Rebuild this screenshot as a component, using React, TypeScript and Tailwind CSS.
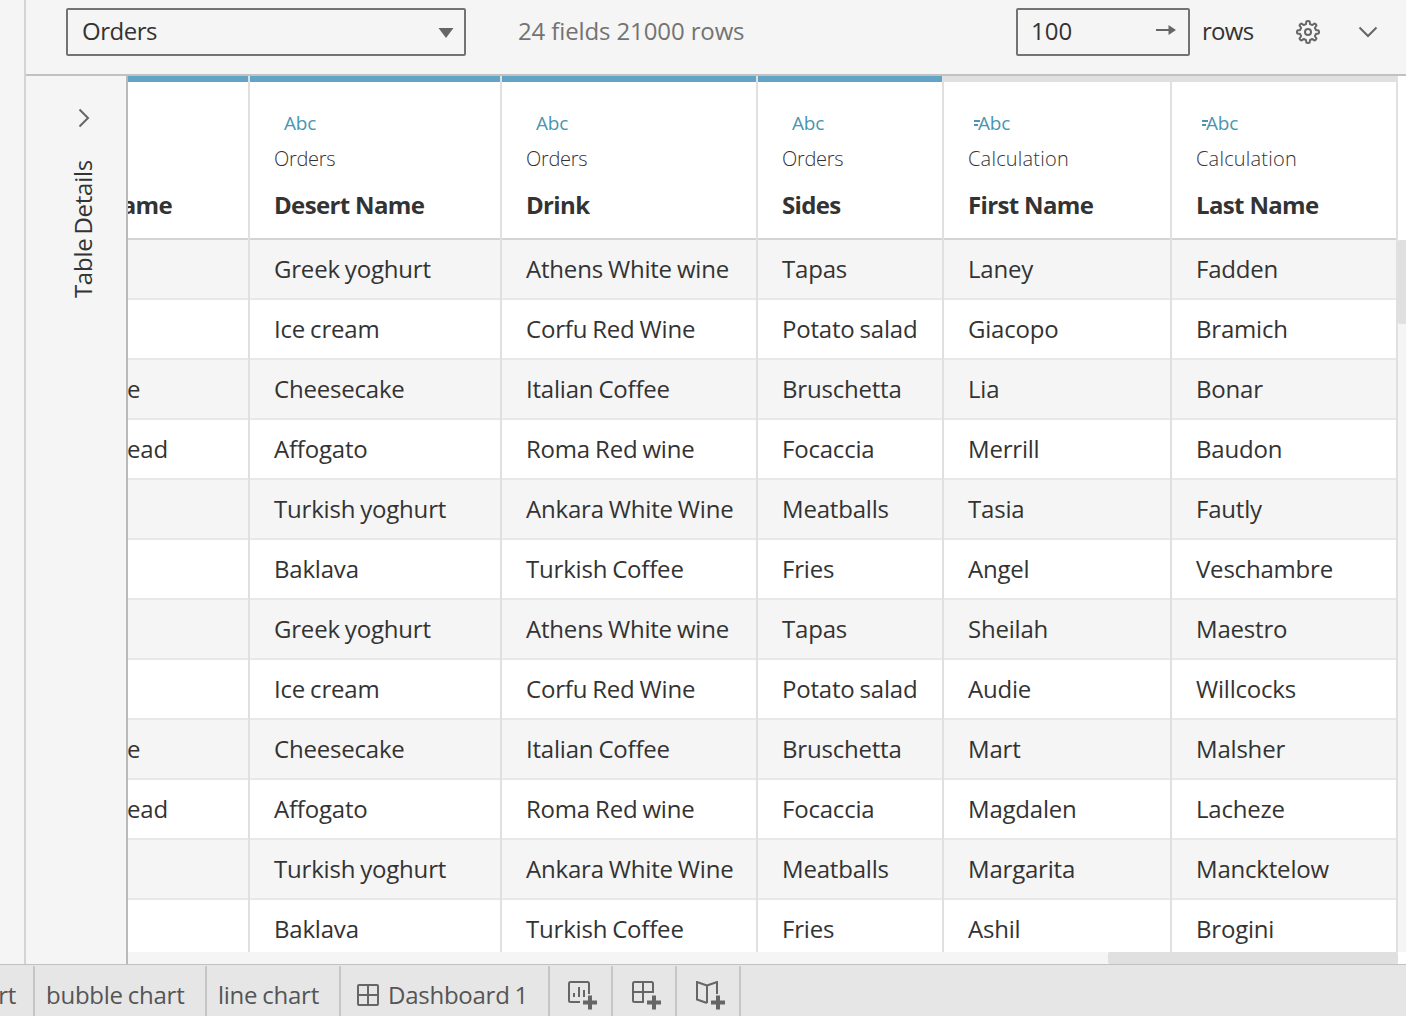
import type { ReactNode } from "react";

type Column = { source: string; name: string; calculated?: boolean };

const columns: Column[] = [
  { source: "", name: "Main Name" },
  { source: "Orders", name: "Desert Name" },
  { source: "Orders", name: "Drink" },
  { source: "Orders", name: "Sides" },
  { source: "Calculation", name: "First Name", calculated: true },
  { source: "Calculation", name: "Last Name", calculated: true },
];

const rows: string[][] = [
  ["", "Greek yoghurt", "Athens White wine", "Tapas", "Laney", "Fadden"],
  ["", "Ice cream", "Corfu Red Wine", "Potato salad", "Giacopo", "Bramich"],
  ["e", "Cheesecake", "Italian Coffee", "Bruschetta", "Lia", "Bonar"],
  ["ead", "Affogato", "Roma Red wine", "Focaccia", "Merrill", "Baudon"],
  ["", "Turkish yoghurt", "Ankara White Wine", "Meatballs", "Tasia", "Fautly"],
  ["", "Baklava", "Turkish Coffee", "Fries", "Angel", "Veschambre"],
  ["", "Greek yoghurt", "Athens White wine", "Tapas", "Sheilah", "Maestro"],
  ["", "Ice cream", "Corfu Red Wine", "Potato salad", "Audie", "Willcocks"],
  ["e", "Cheesecake", "Italian Coffee", "Bruschetta", "Mart", "Malsher"],
  ["ead", "Affogato", "Roma Red wine", "Focaccia", "Magdalen", "Lacheze"],
  ["", "Turkish yoghurt", "Ankara White Wine", "Meatballs", "Margarita", "Mancktelow"],
  ["", "Baklava", "Turkish Coffee", "Fries", "Ashil", "Brogini"],
];

const grid = "grid grid-cols-[122px_252px_256px_186px_228px_226px]";

function GearIcon() {
  return (
    <svg className="size-6" viewBox="0 0 24 24" fill="none" stroke="#666" strokeWidth="2" strokeLinejoin="round">
      <path d="M10.4 1.400Q12 .6 13.600 1.400L14.100 4.200L16.200 5.100L18.500 3.500Q20.100 4 20.500 5.500L18.900 7.800L19.800 9.900L22.600 10.400Q23.400 12 22.600 13.600L19.800 14.100L18.900 16.200L20.500 18.500Q20 20.100 18.500 20.500L16.200 18.900L14.100 19.800L13.600 22.600Q12 23.400 10.400 22.600L9.900 19.800L7.800 18.900L5.500 20.500Q4 20.100 3.500 18.500L5.100 16.200L4.200 14.100L1.400 13.600Q.6 12 1.400 10.400L4.200 9.900L5.100 7.800L3.500 5.500Q4 4 5.500 3.500L7.800 5.100L9.900 4.200Z" />
      <circle cx="12" cy="12" r="3" />
    </svg>
  );
}

function DashboardIcon() {
  return (
    <svg className="size-[22px]" viewBox="0 0 22 22" fill="none" stroke="#666" strokeWidth="2">
      <rect x="1" y="1" width="20" height="20" rx="1" />
      <path d="M11 1v20M1 11h20" />
    </svg>
  );
}

function NewSheetIcon({ kind }: { kind: "worksheet" | "dashboard" | "story" }) {
  return (
    <svg className="h-[29px] w-[30px]" viewBox="0 0 30 29" fill="none" stroke="#666" strokeWidth="2">
      {kind === "worksheet" && (
        <path d="M12 21H2.500Q1 21 1 19.500V2.500Q1 1 2.500 1H19.500Q21 1 21 2.500V13M6 12v4M11 6v10M16 9v7" />
      )}
      {kind === "dashboard" && (
        <path d="M12 21H2.500Q1 21 1 19.500V2.500Q1 1 2.500 1H19.500Q21 1 21 2.500V11H1M11 1V21" />
      )}
      {kind === "story" && <path d="M11 22V4.500L1 1V18.500L11 22M11 4.500L21 1V13" />}
      <path strokeWidth="4" d="M15 21.500H29M22 14.500V28.500" />
    </svg>
  );
}

function TypeLabel({ calculated }: { calculated?: boolean }) {
  return (
    <div className={`flex h-[26px] items-center text-[19px] leading-[26px] font-medium text-[#4996b2] ${calculated ? "pl-[6px]" : "pl-[10px]"}`}>
      {calculated && (
        <svg className="-mr-[2px] h-[6px] w-[6px]" viewBox="0 0 6 6" stroke="#4996b2" strokeWidth="2">
          <path d="M0 1h6M0 5h4" />
        </svg>
      )}
      <span>Abc</span>
    </div>
  );
}

function HeaderCell({ column, clipped }: { column: Column; clipped: boolean }) {
  return (
    <div className="flex overflow-hidden border-r-2 border-[#e0e0e0]">
      <div className={`flex w-full flex-col border-b-2 border-[#d4d4d4] border-t-6 ${column.calculated ? "border-t-[#e0e0e0]" : "border-t-[#62a4c6]"}`}>
        {clipped ? (
          <div className="flex flex-1 items-end justify-end pr-[76px] pb-[17px]">
            <span className="text-2xl leading-8 font-bold tracking-[-0.65px] whitespace-nowrap">{column.name}</span>
          </div>
        ) : (
          <div className="pt-[28px] pl-[24px]">
            <TypeLabel calculated={column.calculated} />
            <div className={`mt-[9px] text-xl leading-[28px] font-light ${column.calculated ? "tracking-[0.2px]" : "tracking-[-0.3px]"}`}>{column.source}</div>
            <div className="mt-[16px] text-2xl leading-8 font-bold tracking-[-0.65px] whitespace-nowrap">{column.name}</div>
          </div>
        )}
      </div>
    </div>
  );
}

function Tab({ className, children }: { className: string; children: ReactNode }) {
  return (
    <div className={`flex h-[58px] shrink-0 items-center border-r-2 border-[#c6c6c6] whitespace-nowrap ${className}`}>{children}</div>
  );
}

export default function App() {
  return (
    <div className="flex h-[1016px] w-[1406px] flex-col overflow-hidden bg-[#f5f5f5] font-['Open_Sans',sans-serif] text-2xl tracking-[-0.25px] text-[#333]">
      <div className="flex h-[964px] shrink-0">
        <div className="w-[26px] shrink-0 border-r-2 border-[#d4d4d4]" />
        <div className="flex min-w-0 flex-1 flex-col">
          <header className="flex h-[76px] shrink-0 items-start border-b-2 border-[#c1c1c1] pt-2 pl-10">
            <div className="flex h-12 w-[400px] items-center justify-between rounded-xs border-2 border-[#737373] pr-[10px] pb-[2px] pl-[14px]">
              <span className="tracking-[-0.5px]">Orders</span>
              <svg className="mt-[4px] h-[10px] w-4" viewBox="0 0 16 10" fill="#666">
                <path d="M0.500 0h15L8 10z" />
              </svg>
            </div>
            <div className="ml-[52px] flex h-[46px] items-center tracking-[-0.12px] text-[#737373]">24 fields 21000 rows</div>
            <div className="ml-auto flex h-12 w-[174px] items-center justify-between rounded-xs border-2 border-[#737373] pr-[12px] pb-[2px] pl-[13px]">
              <span className="tracking-normal">100</span>
              <svg className="mb-[2px] h-[10px] w-5" viewBox="0 0 20 10" fill="#666">
                <path d="M0 4h12.500V0L20 5l-7.500 5V6H0z" />
              </svg>
            </div>
            <div className="ml-[12px] flex h-[46px] w-[94px] items-center tracking-[-0.7px]">rows</div>
            <div className="flex h-12 items-center">
              <GearIcon />
              <svg className="mr-[28px] ml-[38px] h-3 w-5" viewBox="0 0 20 12" fill="none" stroke="#666" strokeWidth="2">
                <path d="M1.500 1.500L10 10l8.500-8.500" />
              </svg>
            </div>
          </header>
          <div className="flex min-h-0 flex-1">
            <aside className="flex w-[102px] shrink-0 flex-col items-center border-r-2 border-[#b9b9b9] pt-8 pl-[15px]">
              <svg className="h-5 w-3" viewBox="0 0 12 20" fill="none" stroke="#666" strokeWidth="2">
                <path d="M1.500 1.500L10 10l-8.500 8.500" />
              </svg>
              <div className="mt-[32px] mr-px rotate-180 leading-8 [word-spacing:-2px] whitespace-nowrap [writing-mode:vertical-rl]">Table Details</div>
            </aside>
            <main className="flex min-w-0 flex-1 flex-col">
              <div className="flex h-[876px] overflow-hidden">
                <div className="w-[1270px] shrink-0 bg-white">
                  <div className={`${grid} h-[164px]`}>
                    {columns.map((column, i) => (
                      <HeaderCell key={i} column={column} clipped={i === 0} />
                    ))}
                  </div>
                  {rows.map((row, r) => (
                    <div key={r} className={`${grid} h-[60px] tracking-[-0.2px] [word-spacing:-1px] ${r % 2 === 0 ? "bg-[#f5f5f5]" : "bg-white"}`}>
                      {row.map((value, c) => (
                        <div key={c} className="flex border-r-2 border-[#e0e0e0]">
                          <div className={`flex w-full items-center border-b-2 border-[#e8e8e8] whitespace-nowrap ${c === 0 ? "-indent-px" : "pl-[24px]"}`}>{value}</div>
                        </div>
                      ))}
                    </div>
                  ))}
                </div>
                <div className="flex flex-1 flex-col">
                  <div className="h-[164px] shrink-0 bg-white" />
                  <div className="h-[84px] shrink-0 rounded-l-xs bg-[#e0e0e0]" />
                </div>
              </div>
              <div className="flex h-3 bg-white">
                <div className="flex w-[1270px] justify-end bg-[#f5f5f5]">
                  <div className="w-[290px] rounded-xs bg-[#e0e0e0]" />
                </div>
              </div>
            </main>
          </div>
        </div>
      </div>
      <nav className="flex h-[52px] shrink-0 overflow-hidden border-t border-[#c1c1c1] bg-[#e6e6e6] pt-px [word-spacing:-1px] text-[#555]">
        <Tab className="w-[35px] justify-end pr-[17px]">bar chart</Tab>
        <Tab className="w-[172px] pl-[11px]">bubble chart</Tab>
        <Tab className="w-[134px] pl-[11px]">line chart</Tab>
        <Tab className="w-[209px] gap-[9px] pl-[16px]">
          <DashboardIcon />
          <span>Dashboard 1</span>
        </Tab>
        <Tab className="w-[63px] pl-[18px]">
          <NewSheetIcon kind="worksheet" />
        </Tab>
        <Tab className="w-[64px] pl-[19px]">
          <NewSheetIcon kind="dashboard" />
        </Tab>
        <Tab className="w-[64px] pl-[19px]">
          <NewSheetIcon kind="story" />
        </Tab>
      </nav>
    </div>
  );
}
